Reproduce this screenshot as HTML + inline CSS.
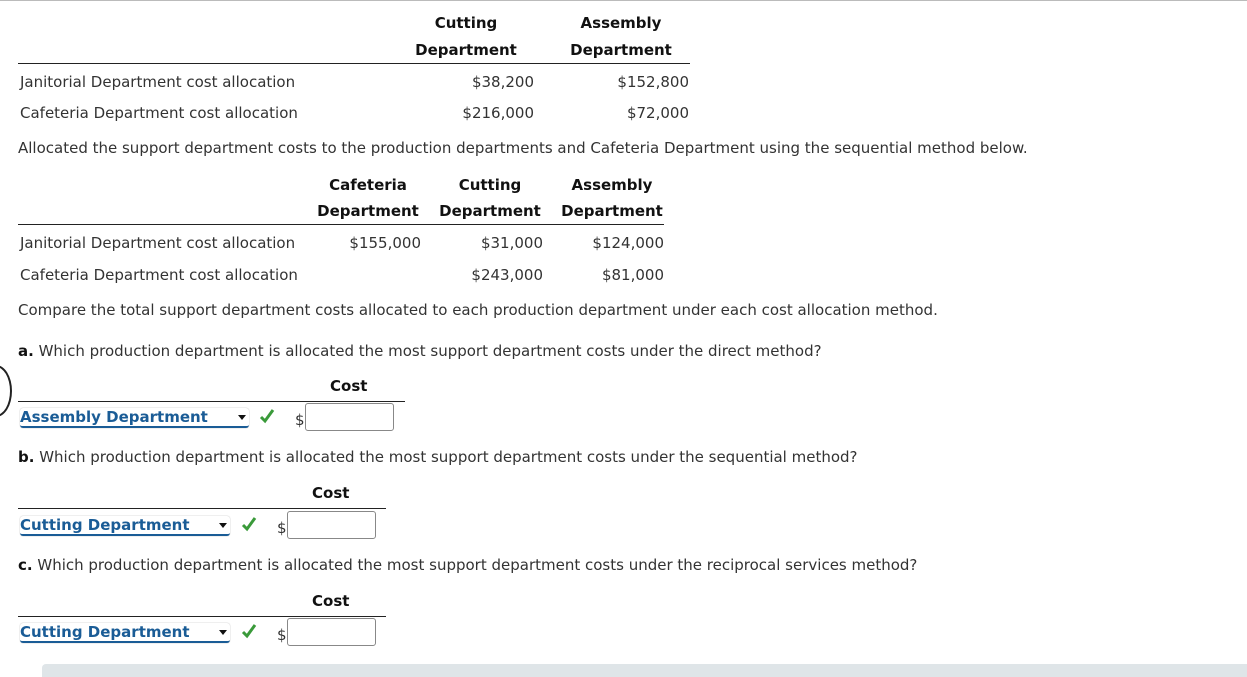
<!DOCTYPE html>
<html><head><style>
body{margin:0;width:1247px;height:677px;background:#fff;position:relative;overflow:hidden;font-family:Verdana,"DejaVu Sans",sans-serif;font-size:15px;color:#333}
.a{position:absolute;white-space:nowrap;line-height:18px;margin-top:1px}
.b{font-weight:bold;color:#111}
.r{text-align:right}
.c{text-align:center}
.ln{position:absolute;height:1px;background:#222}
.sel{position:absolute;color:#1a5c96;font-weight:bold;border-bottom:2px solid #1a5c96;height:18px;line-height:18px;border-radius:3px;box-shadow:0 0 1px #999}
.sel:after{content:"";position:absolute;right:3px;top:7px;border-left:4px solid transparent;border-right:4px solid transparent;border-top:5px solid #111}
.chk{position:absolute;width:16px;height:16px}
.inp{position:absolute;width:89px;height:28px;border:1px solid #888;border-radius:3px;box-sizing:border-box}
</style></head><body>
<div class="ln" style="left:0;top:0;width:1247px;background:#bbb"></div>
<div class="a b c" style="left:406px;top:13px;width:120px">Cutting</div>
<div class="a b c" style="left:406px;top:40px;width:120px">Department</div>
<div class="a b c" style="left:561px;top:13px;width:120px">Assembly</div>
<div class="a b c" style="left:561px;top:40px;width:120px">Department</div>
<div class="ln" style="left:18px;top:63px;width:672px"></div>
<div class="a" style="left:20px;top:72px">Janitorial Department cost allocation</div>
<div class="a r" style="left:400px;top:72px;width:134px">$38,200</div>
<div class="a r" style="left:560px;top:72px;width:129px">$152,800</div>
<div class="a" style="left:20px;top:103px">Cafeteria Department cost allocation</div>
<div class="a r" style="left:400px;top:103px;width:134px">$216,000</div>
<div class="a r" style="left:560px;top:103px;width:129px">$72,000</div>
<div class="a" style="left:18px;top:138px">Allocated the support department costs to the production departments and Cafeteria Department using the sequential method below.</div>
<div class="a b c" style="left:308px;top:175px;width:120px">Cafeteria</div>
<div class="a b c" style="left:308px;top:201px;width:120px">Department</div>
<div class="a b c" style="left:430px;top:175px;width:120px">Cutting</div>
<div class="a b c" style="left:430px;top:201px;width:120px">Department</div>
<div class="a b c" style="left:552px;top:175px;width:120px">Assembly</div>
<div class="a b c" style="left:552px;top:201px;width:120px">Department</div>
<div class="ln" style="left:18px;top:224px;width:646px"></div>
<div class="a" style="left:20px;top:233px">Janitorial Department cost allocation</div>
<div class="a r" style="left:320px;top:233px;width:101px">$155,000</div>
<div class="a r" style="left:440px;top:233px;width:103px">$31,000</div>
<div class="a r" style="left:560px;top:233px;width:104px">$124,000</div>
<div class="a" style="left:20px;top:265px">Cafeteria Department cost allocation</div>
<div class="a r" style="left:440px;top:265px;width:103px">$243,000</div>
<div class="a r" style="left:560px;top:265px;width:104px">$81,000</div>
<div class="a" style="left:18px;top:300px">Compare the total support department costs allocated to each production department under each cost allocation method.</div>
<div class="a" style="left:18px;top:341px"><b style="color:#111">a.</b> Which production department is allocated the most support department costs under the direct method?</div>
<div style="position:absolute;left:-20px;top:365px;width:28px;height:48px;border:2px solid #222;border-radius:50%"></div>
<div class="a b" style="left:330px;top:376px">Cost</div>
<div class="ln" style="left:18px;top:401px;width:387px"></div>
<div class="sel" style="left:20px;top:408px;width:229px">Assembly Department</div>
<svg class="chk" style="left:259px;top:408px" viewBox="0 0 16 16"><path d="M2 9 L6 13 L14 2" fill="none" stroke="#3a9a3a" stroke-width="3"/></svg>
<div class="a" style="left:295px;top:410px">$</div>
<div class="inp" style="left:305px;top:403px"></div>
<div class="a" style="left:18px;top:447px"><b style="color:#111">b.</b> Which production department is allocated the most support department costs under the sequential method?</div>
<div class="a b" style="left:312px;top:483px">Cost</div>
<div class="ln" style="left:18px;top:508px;width:368px"></div>
<div class="sel" style="left:20px;top:516px;width:210px">Cutting Department</div>
<svg class="chk" style="left:241px;top:516px" viewBox="0 0 16 16"><path d="M2 9 L6 13 L14 2" fill="none" stroke="#3a9a3a" stroke-width="3"/></svg>
<div class="a" style="left:277px;top:518px">$</div>
<div class="inp" style="left:287px;top:511px"></div>
<div class="a" style="left:18px;top:555px"><b style="color:#111">c.</b> Which production department is allocated the most support department costs under the reciprocal services method?</div>
<div class="a b" style="left:312px;top:591px">Cost</div>
<div class="ln" style="left:18px;top:616px;width:368px"></div>
<div class="sel" style="left:20px;top:623px;width:210px">Cutting Department</div>
<svg class="chk" style="left:241px;top:623px" viewBox="0 0 16 16"><path d="M2 9 L6 13 L14 2" fill="none" stroke="#3a9a3a" stroke-width="3"/></svg>
<div class="a" style="left:277px;top:625px">$</div>
<div class="inp" style="left:287px;top:618px"></div>
<div style="position:absolute;left:42px;top:664px;width:1205px;height:13px;background:#dfe5e8;border-radius:4px 0 0 0"></div>
</body></html>
